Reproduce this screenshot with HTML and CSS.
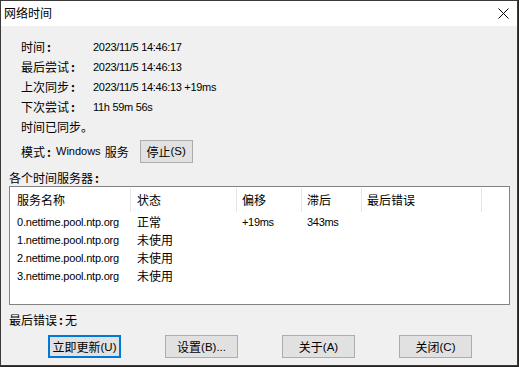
FILE: index.html
```html
<!DOCTYPE html>
<html lang="zh-CN">
<head>
<meta charset="utf-8">
<title>网络时间</title>
<link rel="stylesheet" href="styles.css">
</head>
<body>
<div class="window">
  <div class="titlebar">
    <span class="title">网络时间</span>
    <span class="close"><svg width="11" height="11" viewBox="0 0 11 11"><path d="M0.5 0.5 L10.5 10.5 M10.5 0.5 L0.5 10.5" stroke="#000" stroke-width="1" fill="none"/></svg></span>
  </div>
  <div class="content">
    <div class="info">
      <div class="row"><span class="label">时间<span class="colon">:</span></span><span class="val en">2023/11/5 14:46:17</span></div>
      <div class="row"><span class="label">最后尝试<span class="colon">:</span></span><span class="val en">2023/11/5 14:46:13</span></div>
      <div class="row"><span class="label">上次同步<span class="colon">:</span></span><span class="val en">2023/11/5 14:46:13 +19ms</span></div>
      <div class="row"><span class="label">下次尝试<span class="colon">:</span></span><span class="val en">11h 59m 56s</span></div>
      <div class="row"><span>时间已同步。</span></div>
      <div class="mode">
        <span class="mlabel">模式<span class="colon">:</span></span><span class="en mval">Windows</span><span class="msvc">服务</span>
        <button class="btn small">停止<span class="en">(S)</span></button>
      </div>
    </div>
    <div class="group">各个时间服务器<span class="colon">:</span></div>
    <div class="list">
      <div class="grid head">
        <div class="c c1">服务名称</div>
        <div class="c c2">状态</div>
        <div class="c c3">偏移</div>
        <div class="c c4">滞后</div>
        <div class="c c5">最后错误</div>
      </div>
      <div class="grid rowd">
        <div class="c c1 en">0.nettime.pool.ntp.org</div>
        <div class="c c2">正常</div>
        <div class="c c3 en">+19ms</div>
        <div class="c c4 en">343ms</div>
        <div class="c c5"></div>
      </div>
      <div class="grid rowd">
        <div class="c c1 en">1.nettime.pool.ntp.org</div>
        <div class="c c2">未使用</div>
        <div class="c c3"></div>
        <div class="c c4"></div>
        <div class="c c5"></div>
      </div>
      <div class="grid rowd">
        <div class="c c1 en">2.nettime.pool.ntp.org</div>
        <div class="c c2">未使用</div>
        <div class="c c3"></div>
        <div class="c c4"></div>
        <div class="c c5"></div>
      </div>
      <div class="grid rowd">
        <div class="c c1 en">3.nettime.pool.ntp.org</div>
        <div class="c c2">未使用</div>
        <div class="c c3"></div>
        <div class="c c4"></div>
        <div class="c c5"></div>
      </div>
    </div>
    <div class="lasterr">最后错误<span class="colon">:</span>无</div>
    <div class="buttons">
      <button class="btn default">立即更新<span class="en">(U)</span></button>
      <button class="btn">设置<span class="en">(B)...</span></button>
      <button class="btn">关于<span class="en">(A)</span></button>
      <button class="btn">关闭<span class="en">(C)</span></button>
    </div>
  </div>
</div>
</body>
</html>
```
FILE: styles.css
```css
html, body {
  margin: 0;
  padding: 0;
  background: #262322;
  width: 519px;
  height: 367px;
  overflow: hidden;
}
body {
  font-family: "Noto Sans CJK SC", "Liberation Sans", sans-serif;
  font-size: 12px;
  color: #000;
}
.window {
  width: 516px;
  height: 364px;
  border: 1px solid #3a3a3a;
  background: #f0f0f0;
  display: flex;
  flex-direction: column;
}
.titlebar {
  height: 25px;
  background: #fff;
  display: flex;
  align-items: center;
  justify-content: space-between;
  padding-left: 3px;
  padding-right: 8px;
}
.title {
  line-height: 14px;
  margin-top: -1px;
}
.close {
  display: flex;
  margin-top: -1px;
}
.content {
  display: flex;
  flex-direction: column;
}
.colon {
  margin-left: 2px;
  margin-right: 2px;
  font-weight: bold;
}
.en {
  font-family: "Liberation Sans", sans-serif;
  font-size: 11px;
  letter-spacing: -0.3px;
}
.info {
  padding: 11px 0 0 20px;
  display: flex;
  flex-direction: column;
}
.row {
  height: 20px;
  line-height: 20px;
  display: flex;
  white-space: nowrap;
}
.label {
  width: 72px;
}
.val {
  line-height: 20px;
}
.mode {
  margin-top: 3px;
  height: 22px;
  display: flex;
  align-items: center;
  white-space: nowrap;
}
.mlabel {
  width: 35px;
  overflow: hidden;
}
.mval {
  letter-spacing: 0;
  margin-right: 4px;
}
.msvc {
  margin-right: 11px;
}
.btn {
  font-family: "Noto Sans CJK SC", "Liberation Sans", sans-serif;
  font-size: 12px;
  color: #000;
  background: #e1e1e1;
  border: 1px solid #adadad;
  padding: 0;
  margin: 0;
  display: flex;
  align-items: center;
  justify-content: center;
  white-space: nowrap;
}
.btn .en {
  letter-spacing: 0;
  font-size: 11.5px;
}
.small {
  width: 53px;
  height: 23px;
}
.group {
  margin-top: 8px;
  padding-left: 8px;
  line-height: 16px;
  height: 16px;
}
.list {
  margin-left: 8px;
  width: 499px;
  height: 117px;
  border: 1px solid #828282;
  background: #fff;
}
.grid {
  display: grid;
  grid-template-columns: 121px 106px 65px 60px 120px;
  white-space: nowrap;
}
.head {
  height: 26px;
}
.head .c {
  line-height: 26px;
  position: relative;
}
.head .c::after {
  content: "";
  position: absolute;
  right: 0;
  top: 1px;
  bottom: 1px;
  width: 1px;
  background: #e5e5e5;
}
.rowd {
  height: 18px;
}
.rowd .c {
  line-height: 18px;
}
.c {
  padding-left: 6px;
  overflow: hidden;
}
.c1 {
  padding-left: 7px;
}
.c3, .c4, .c5 {
  padding-left: 5px;
}
.rowd .c1.en {
  letter-spacing: -0.2px;
}
.lasterr {
  margin-top: 5px;
  padding-left: 8px;
  height: 20px;
  line-height: 20px;
}
.buttons {
  margin-top: 5px;
  padding-left: 47px;
  display: flex;
  gap: 44px;
}
.buttons .btn {
  width: 73px;
  height: 23px;
}
.buttons .default {
  border: 2px solid #0078d7;
}
```
